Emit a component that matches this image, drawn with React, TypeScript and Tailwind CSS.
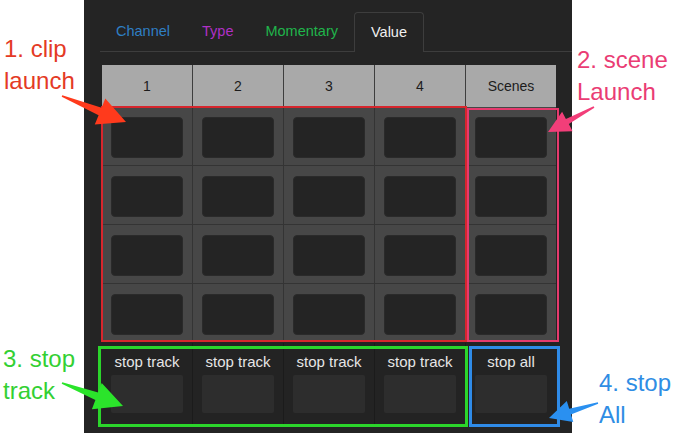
import React from 'react'

const cols = ['1', '2', '3', '4', 'Scenes']
const rows = [0, 1, 2, 3]

type Pt = [number, number]

// tapered Keynote-style arrow, tail thin, head a triangle
function arrowPoints(t: Pt, p: Pt, headLen: number, headHalf: number, shaftHalf: number) {
  const dx = p[0] - t[0]
  const dy = p[1] - t[1]
  const len = Math.hypot(dx, dy)
  const ux = dx / len
  const uy = dy / len
  const nx = -uy
  const ny = ux
  const bx = p[0] - ux * headLen
  const by = p[1] - uy * headLen
  const pts: Pt[] = [
    [t[0] + nx * 0.8, t[1] + ny * 0.8],
    [bx + nx * shaftHalf, by + ny * shaftHalf],
    [bx + nx * headHalf, by + ny * headHalf],
    p,
    [bx - nx * headHalf, by - ny * headHalf],
    [bx - nx * shaftHalf, by - ny * shaftHalf],
    [t[0] - nx * 0.8, t[1] - ny * 0.8],
  ]
  return pts.map(([x, y]) => `${x.toFixed(1)},${y.toFixed(1)}`).join(' ')
}

function Tab({ label, color, active }: { label: string; color: string; active?: boolean }) {
  return (
    <div
      className={
        'flex items-center px-4 text-[14.5px] ' +
        color +
        (active ? ' -mb-px border border-b-0 border-[#3d3d3d] rounded-t-[4px] bg-[#242424]' : '')
      }
    >
      {label}
    </div>
  )
}

function Callout({ lines, color, className }: { lines: string[]; color: string; className: string }) {
  return (
    <div className={'absolute text-[24px] leading-[32px] whitespace-nowrap ' + color + ' ' + className}>
      {lines.map((l) => (
        <div key={l}>{l}</div>
      ))}
    </div>
  )
}

export default function App() {
  return (
    <div
      className="relative w-[685px] h-[440px] overflow-hidden bg-white flex"
      style={{ fontFamily: '"Liberation Sans", Arial, sans-serif' }}
    >
      <div className="ml-[84px] w-[488px] h-[433px] bg-[#242424] pt-3">
        <div className="ml-4 flex h-10 border-b border-[#3d3d3d]">
          <Tab label="Channel" color="text-[#2f7fc4]" />
          <Tab label="Type" color="text-[#b030c6]" />
          <Tab label="Momentary" color="text-[#20b44b]" />
          <Tab label="Value" color="text-[#f0f0f0]" active />
        </div>

        <div className="ml-[18px] mt-[13px] w-[454px]">
          <div className="flex gap-px bg-[#3e3e3e]">
            {cols.map((c) => (
              <div key={c} className="w-[90px] h-[42px] bg-[#a9a9a9] flex items-center justify-center text-[14px] text-[#1c1c1c]">
                {c}
              </div>
            ))}
          </div>

          <div className="flex flex-col gap-px bg-[#343434]">
            {rows.map((r) => (
              <div key={r} className="flex gap-px">
                {cols.map((c) => (
                  <div key={c} className="w-[90px] h-[58px] bg-[#474747] pt-[10px] px-[9px]">
                    <div className="h-[41px] rounded-[4px] bg-[#242424] border border-[#2a2a2a]" />
                  </div>
                ))}
              </div>
            ))}
          </div>

          <div className="mt-px flex gap-px bg-[#1b1b1b]">
            {['stop track', 'stop track', 'stop track', 'stop track', 'stop all'].map((l, i) => (
              <div key={i} className="w-[90px] h-[84px] bg-[#232323] pt-[10px] px-[9px]">
                <div className="text-center text-[15px] leading-[18px] text-[#e6e6e6]">{l}</div>
                <div className="mt-1 h-[38px] rounded-[2px] bg-[#2d2d2d]" />
              </div>
            ))}
          </div>
        </div>
      </div>

      {/* group outlines */}
      <div className="absolute left-[101px] top-[106px] w-[366px] h-[236px] border-2 border-[#d7262d]" />
      <div className="absolute left-[467px] top-[108px] w-[92px] h-[234px] border-2 border-[#e63a6e]" />
      <div className="absolute left-[98px] top-[346px] w-[370px] h-[81px] border-[3px] border-[#2bd52b]" />
      <div className="absolute left-[469px] top-[346px] w-[91px] h-[81px] border-[3px] border-[#2f8be8]" />

      <Callout lines={['1. clip', 'launch']} color="text-[#e43a25]" className="left-[4px] top-[33px] leading-[31px]" />
      <Callout lines={['2. scene', 'Launch']} color="text-[#ea3c74]" className="left-[577px] top-[44px]" />
      <Callout lines={['3. stop', 'track']} color="text-[#33d033]" className="left-[3px] top-[343px]" />
      <Callout lines={['4. stop', 'All']} color="text-[#2f8de4]" className="left-[599px] top-[367px]" />

      <svg className="absolute left-0 top-0 pointer-events-none" width="685" height="440" viewBox="0 0 685 440">
        <polygon points={arrowPoints([62, 96], [126, 122], 28, 14, 4)} fill="#ff3a1c" />
        <polygon points={arrowPoints([594, 107], [548, 132], 22, 11, 3)} fill="#f23e79" />
        <polygon points={arrowPoints([62, 383], [123, 406], 28, 14, 4)} fill="#2be42b" />
        <polygon points={arrowPoints([598, 403], [549, 418], 22, 11, 3)} fill="#2a90f0" />
      </svg>
    </div>
  )
}
